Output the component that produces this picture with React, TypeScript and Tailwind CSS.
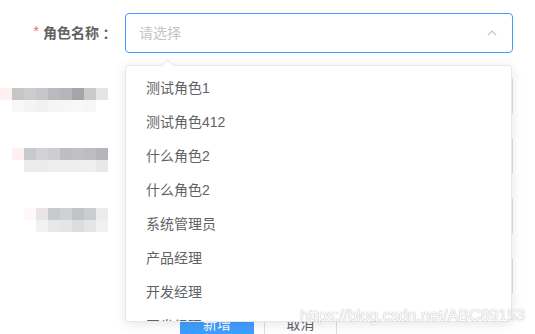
import React from "react";

const font = "font-['Liberation_Sans','Noto_Sans_CJK_SC',sans-serif]";

type Cells = { offset: string; top: string[]; bottom: string[]; bottomOffset: string; mt: string };

const blur: Cells[] = [
  {
    mt: "mt-[23px]",
    offset: "ml-0",
    bottomOffset: "ml-0",
    top: ["bg-[#fff0f0]", "bg-[#c5c6c9]", "bg-[#cbccce]", "bg-[#c6c7ca]", "bg-[#b9babd]", "bg-[#b5b6b9]", "bg-[#a4a5a8]", "bg-[#c8c9cb]", "bg-[#e4e4e5]"],
    bottom: ["bg-[#ffffff]", "bg-[#f8f8f8]", "bg-[#f4f4f5]", "bg-[#f1f1f2]", "bg-[#f5f5f6]", "bg-[#f6f6f6]", "bg-[#f8f8f8]", "bg-[#f6f6f6]", "bg-[#ffffff]"],
  },
  {
    mt: "mt-[20px]",
    offset: "ml-[12px]",
    bottomOffset: "ml-[24px]",
    top: ["bg-[#fff0f0]", "bg-[#c8c9cc]", "bg-[#d2d3d5]", "bg-[#cdced0]", "bg-[#bdbec1]", "bg-[#bfc0c3]", "bg-[#bcbdc0]", "bg-[#b5b6b9]"],
    bottom: ["bg-[#ececed]", "bg-[#ebebec]", "bg-[#eeeeef]", "bg-[#ededee]", "bg-[#eeeeee]", "bg-[#efefef]", "bg-[#e8e8e9]"],
  },
  {
    mt: "mt-[20px]",
    offset: "ml-[24px]",
    bottomOffset: "ml-[36px]",
    top: ["bg-[#fff8f8]", "bg-[#ebe4e4]", "bg-[#c8c9cc]", "bg-[#d0d1d3]", "bg-[#c2c3c6]", "bg-[#cbccce]", "bg-[#ececed]"],
    bottom: ["bg-[#f1f2f2]", "bg-[#e6e7e8]", "bg-[#e4e5e6]", "bg-[#dcdddf]", "bg-[#e3e4e5]", "bg-[#f0f0f1]"],
  },
];

const items = ["测试角色1", "测试角色412", "什么角色2", "什么角色2", "系统管理员", "产品经理", "开发经理", "开发经理1"];

function BlurLabel({ c }: { c: Cells }) {
  return (
    <div className="flex flex-col pt-[12px]">
      <div className={`flex ${c.offset}`}>
        {c.top.map((b, i) => (
          <div key={i} className={`w-[12px] h-[12px] ${b}`} />
        ))}
      </div>
      <div className={`flex ${c.bottomOffset}`}>
        {c.bottom.map((b, i) => (
          <div key={i} className={`w-[12px] h-[12px] ${b}`} />
        ))}
      </div>
    </div>
  );
}

export default function App() {
  return (
    <div className={`relative w-[535px] h-[334px] overflow-hidden bg-white ${font}`}>
      <div className="flex flex-col pt-[13px]">
        <div className="flex items-center h-[40px]">
          <div className="w-[125px] pr-[12px] flex justify-end items-center text-[14px] font-bold text-[#606266]">
            <span className="text-[#f56c6c] mr-[4px] font-normal text-[14px] relative top-[-2px]">*</span>
            <span>角色名称</span>
            <span className="font-['Noto_Sans_CJK_TC',sans-serif]">：</span>
          </div>
          <div className="w-[388px] h-[40px] border border-[#409eff] rounded-[4px] flex items-center justify-between pl-[13px] pr-[13px]">
            <span className="text-[14px] text-[#c0c4cc]">请选择</span>
            <svg width="12" height="12" viewBox="0 0 12 12" className="mr-[1px]">
              <path d="M2 8 L6 4 L10 8" fill="none" stroke="#c0c4cc" strokeWidth="1.2" />
            </svg>
          </div>
        </div>
        {blur.map((c, i) => (
          <div key={i} className={`flex h-[40px] ${c.mt}`}>
            <div className="w-[125px]">
              <BlurLabel c={c} />
            </div>
            <div className="w-[388px] h-[40px] border border-[#dcdfe6] rounded-[4px]" />
          </div>
        ))}
        <div className="flex h-[40px] mt-[20px]">
          <div className="w-[125px]" />
          <div className="w-[388px] h-[40px] border border-[#dcdfe6] rounded-[4px]" />
        </div>
        <div className="flex gap-[10px] ml-[180px] mt-[8px]">
          <div className="w-[74px] h-[40px] bg-[#409eff] rounded-[4px] text-white text-[14px] flex items-center justify-center">新增</div>
          <div className="w-[73px] h-[40px] bg-white border border-[#dcdfe6] rounded-[4px] text-[#606266] text-[14px] flex items-center justify-center">取消</div>
        </div>
      </div>

      <div className="absolute left-[125px] top-[65px] w-[387px] h-[257px] bg-white border border-[#e4e7ed] rounded-[4px] shadow-[0_2px_12px_0_rgba(0,0,0,0.1)]">
        <div className="absolute left-[37px] top-[-5px] w-[9px] h-[9px] rotate-45 bg-white border-l border-t border-[#e4e7ed]" />
        <div className="relative h-full overflow-hidden pt-[5px]">
          {items.map((t, i) => (
            <div key={i} className="h-[34px] leading-[34px] px-[20px] text-[14px] text-[#606266] whitespace-nowrap">
              {t}
            </div>
          ))}
        </div>
      </div>

      <div className="absolute left-[300px] top-[304px] text-[16px] font-['Liberation_Sans',sans-serif] text-white [text-shadow:0_0_1px_rgba(0,0,0,0.45)] whitespace-nowrap">
        https://blog.csdn.net/ABC89153
      </div>
    </div>
  );
}
